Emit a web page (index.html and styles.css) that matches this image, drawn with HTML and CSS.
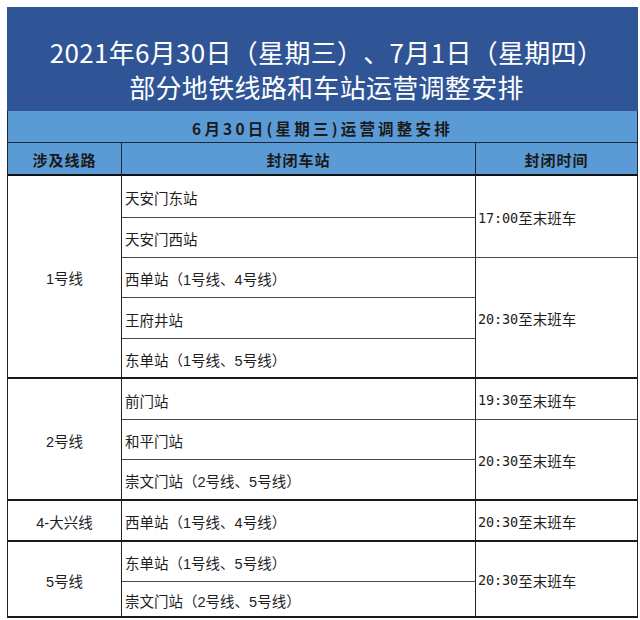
FILE: index.html
```html
<!DOCTYPE html>
<html lang="zh-CN">
<head>
<meta charset="utf-8">
<title>地铁运营调整安排</title>
<link rel="stylesheet" href="styles.css">
</head>
<body>
<div class="page">
  <div class="sheet">
    <div class="title">
      <div class="tl">2021年6月30日（星期三）、7月1日（星期四）</div>
      <div class="tl">部分地铁线路和车站运营调整安排</div>
    </div>
    <div class="sub">6月30日(星期三)运营调整安排</div>
    <div class="head c1">涉及线路</div>
    <div class="head c2">封闭车站</div>
    <div class="head c3">封闭时间</div>

    <div class="cell c1 span5 grp">1号线</div>
    <div class="cell c2 st thin">天安门东站</div>
    <div class="cell c3 tm span2 thin"><span class="t">17:00</span>至末班车</div>
    <div class="cell c2 st thin">天安门西站</div>
    <div class="cell c2 st thin">西单站（1号线、4号线）</div>
    <div class="cell c3 tm span3 grp"><span class="t">20:30</span>至末班车</div>
    <div class="cell c2 st thin">王府井站</div>
    <div class="cell c2 st grp">东单站（1号线、5号线）</div>

    <div class="cell c1 span3 grp">2号线</div>
    <div class="cell c2 st thin">前门站</div>
    <div class="cell c3 tm thin"><span class="t">19:30</span>至末班车</div>
    <div class="cell c2 st thin">和平门站</div>
    <div class="cell c3 tm span2 grp"><span class="t">20:30</span>至末班车</div>
    <div class="cell c2 st grp">崇文门站（2号线、5号线）</div>

    <div class="cell c1 grp">4-大兴线</div>
    <div class="cell c2 st grp">西单站（1号线、4号线）</div>
    <div class="cell c3 tm grp"><span class="t">20:30</span>至末班车</div>

    <div class="cell c1 span2 grp">5号线</div>
    <div class="cell c2 st thin">东单站（1号线、5号线）</div>
    <div class="cell c3 tm span2 grp"><span class="t">20:30</span>至末班车</div>
    <div class="cell c2 st grp">崇文门站（2号线、5号线）</div>
  </div>
</div>
</body>
</html>
```
FILE: styles.css
```css
* { box-sizing: border-box; }
html, body { margin: 0; padding: 0; background: #fff; }
body {
  font-family: "Liberation Sans", "Noto Sans CJK SC", sans-serif;
  color: #1e1e1e;
  text-spacing-trim: space-all;
}
.page {
  width: 640px;
  height: 620px;
  padding: 7px 2px 0 7px;
  overflow: hidden;
}
.sheet {
  display: grid;
  width: 631px;
  grid-template-columns: 115px 354px 162px;
  grid-template-rows: 104px 32px 33px 42px 40px 40px 41px 40px 41px 40px 41px 41px 40px 36px;
}
.title {
  grid-column: 1 / -1;
  background: #2f5597;
  color: #fff;
  font-family: "Noto Sans CJK SC", sans-serif;
  font-size: 26px;
  letter-spacing: 0.3px;
  text-align: center;
  padding-top: 32px;
  padding-left: 8px;
  display: flex;
  flex-direction: column;
  align-items: center;
}
.tl {
  line-height: 26px;
  height: 35px;
}
.sub {
  grid-column: 1 / -1;
  background: #5b9bd5;
  border-left: 1px solid #1b2838;
  border-right: 1px solid #1b2838;
  border-bottom: 1px solid #1b2838;
  display: flex;
  align-items: center;
  justify-content: center;
  font-family: "Noto Sans CJK SC", sans-serif;
  font-weight: 700;
  font-size: 15.5px;
  letter-spacing: 3.2px;
  color: #1a1a1a;
  padding-top: 2px;
}
.head {
  background: #5b9bd5;
  border-right: 1px solid #1b2838;
  border-bottom: 2px solid #111;
  display: flex;
  align-items: center;
  justify-content: center;
  font-family: "Noto Sans CJK SC", sans-serif;
  font-weight: 700;
  font-size: 15px;
  letter-spacing: 1px;
  color: #1a1a1a;
  padding-top: 2px;
}
.head.c1 { border-left: 1px solid #1b2838; }
.c1 { grid-column: 1; }
.c2 { grid-column: 2; }
.c3 { grid-column: 3; }
.span2 { grid-row: span 2; }
.span3 { grid-row: span 3; }
.span5 { grid-row: span 5; }
.cell {
  display: flex;
  align-items: center;
  border-right: 1px solid #222;
  font-size: 14.5px;
  color: #1e1e1e;
  padding-top: 2px;
}
.cell.c1 {
  justify-content: center;
  border-left: 1px solid #222;
}
.st { padding-left: 3px; }
.tm { padding-left: 2px; }
.t {
  font-family: "DejaVu Sans Mono", monospace;
  font-size: 13.5px;
  letter-spacing: -0.1px;
}
.thin { border-bottom: 1px solid #4a4a4a; }
.grp { border-bottom: 2px solid #1a1a1a; }
```
